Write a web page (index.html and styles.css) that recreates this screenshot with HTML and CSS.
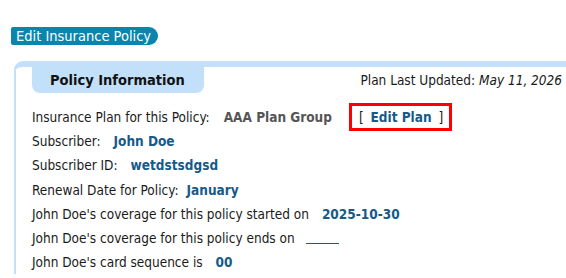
FILE: index.html
```html
<!DOCTYPE html>
<html lang="en">
<head>
    <meta charset="UTF-8">
    <title>Edit Insurance Policy</title>
    <link rel="stylesheet" href="styles.css">
</head>
<body>
    <div class="page">
        <a class="edit-btn" href="#">Edit Insurance Policy</a>

        <div class="panel">
            <div class="panel-head">
                <div class="tab">Policy Information</div>
                <div class="updated">Plan Last Updated: <em>May 11, 2026</em></div>
            </div>

            <div class="rows">
                <div class="row">
                    <span class="label">Insurance Plan for this Policy:</span>
                    <span class="plan">AAA Plan Group</span>
                    <span class="edit-plan">[ <a href="#">Edit Plan</a> ]</span>
                </div>
                <div class="row">
                    <span class="label">Subscriber:</span>
                    <span class="value">John Doe</span>
                </div>
                <div class="row">
                    <span class="label">Subscriber ID:</span>
                    <span class="value">wetdstsdgsd</span>
                </div>
                <div class="row">
                    <span class="label">Renewal Date for Policy:</span>
                    <span class="value tight">January</span>
                </div>
                <div class="row">
                    <span class="label">John Doe's coverage for this policy started on</span>
                    <span class="value">2025-10-30</span>
                </div>
                <div class="row">
                    <span class="label">John Doe's coverage for this policy ends on</span>
                    <span class="blank"></span>
                </div>
                <div class="row">
                    <span class="label">John Doe's card sequence is</span>
                    <span class="value">00</span>
                </div>
            </div>
        </div>
    </div>
</body>
</html>
```

FILE: styles.css
```css
* {
    box-sizing: border-box;
    margin: 0;
    padding: 0;
}
body {
    font-family: "DejaVu Sans Condensed", "DejaVu Sans", sans-serif;
    font-size: 13.5px;
    color: #1a1a1a;
    background: #fff;
    overflow: hidden;
}
.page {
    padding: 27px 0 0 11px;
}
.edit-btn {
    display: inline-block;
    background: #0b85ad;
    color: #fff;
    text-decoration: none;
    font-size: 14.5px;
    height: 18px;
    line-height: 18px;
    padding: 0 7px 0 5px;
    border-radius: 2px 9px 9px 2px;
}
.panel {
    margin: 16px 0 0 3px;
    border-top: 6px solid #c3e0fb;
    border-left: 2px solid #c3e0fb;
    border-top-left-radius: 9px;
}
.panel-head {
    display: flex;
    justify-content: space-between;
    align-items: flex-start;
    padding-right: 4px;
}
.tab {
    margin-left: 16px;
    width: 172px;
    height: 26px;
    line-height: 26px;
    padding-left: 18px;
    background: #c3e0fb;
    border-radius: 0 0 8px 8px;
    font-weight: bold;
    font-size: 14.5px;
    color: #111;
}
.updated {
    padding-top: 5px;
}
.updated em {
    font-style: italic;
}
.rows {
    padding: 12px 0 0 16px;
}
.row {
    display: flex;
    align-items: center;
    height: 24.2px;
}
.value, .plan {
    font-weight: bold;
    color: #175a8a;
    margin-left: 13px;
}
.value.tight {
    margin-left: 8px;
}
.plan {
    color: #555;
    margin-left: 14px;
}
.edit-plan {
    margin-left: 17px;
    border: 3px solid #f00;
    padding: 3px 6px 3px 7px;
    word-spacing: 3px;
}
.edit-plan a {
    color: #175a8a;
    font-weight: bold;
    text-decoration: none;
    word-spacing: 0;
}
.blank {
    display: inline-block;
    width: 33px;
    border-bottom: 1px solid #175a8a;
    margin-left: 11px;
    height: 12px;
}
```
